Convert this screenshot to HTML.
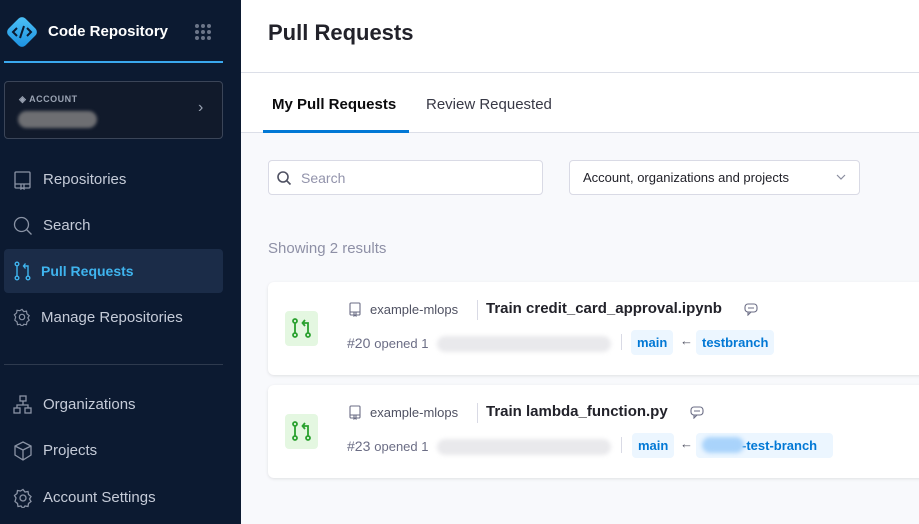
<!DOCTYPE html>
<html><head><style>
*{box-sizing:border-box;margin:0;padding:0}
body{width:919px;height:524px;overflow:hidden;font-family:"Liberation Sans",sans-serif;background:#f8f9fc;position:relative}
.sb{position:absolute;left:0;top:0;width:241px;height:524px;background:#0c1a31;color:#c9cfdb}
.abs{position:absolute}
.ic{position:absolute;left:13px}
.tx{position:absolute;left:43px;font-size:15px;color:#c5cbd8}
.card{position:absolute;left:268px;width:660px;height:93px;background:#fff;border-radius:6px;box-shadow:0 1px 3px rgba(0,0,0,.1)}
.tag{position:absolute;background:#ecf6ff;color:#0278d5;font-weight:bold;font-size:13px;padding:5px 6px;border-radius:4px}
.blur{position:absolute;height:16px;background:#e9e9ec;border-radius:8px;filter:blur(2px)}
</style></head><body>
<div class="sb">
  <svg class="abs" style="left:4px;top:14px" width="36" height="36" viewBox="0 0 36 36"><defs><linearGradient id="g" x1="0" y1="0" x2="1" y2="1"><stop offset="0" stop-color="#4fc3f7"/><stop offset="1" stop-color="#1a8fe0"/></linearGradient></defs><rect x="6" y="6" width="24" height="24" rx="5" transform="rotate(45 18 18)" fill="url(#g)"/><path d="M13 14l-4 4 4 4M23 14l4 4-4 4M20 12l-4 12" stroke="#0c1a31" stroke-width="2" fill="none"/></svg>
  <div class="abs" style="left:48px;top:23px;color:#fff;font-weight:bold;font-size:15px">Code Repository</div>
  <svg class="abs" style="left:194px;top:23px" width="18" height="18"><g fill="#6b7588"><circle cx="3" cy="3" r="2"/><circle cx="9" cy="3" r="2"/><circle cx="15" cy="3" r="2"/><circle cx="3" cy="9" r="2"/><circle cx="9" cy="9" r="2"/><circle cx="15" cy="9" r="2"/><circle cx="3" cy="15" r="2"/><circle cx="9" cy="15" r="2"/><circle cx="15" cy="15" r="2"/></g></svg>
  <div class="abs" style="left:4px;top:61px;width:219px;height:2px;background:#3aa8ee"></div>
  <div class="abs" style="left:4px;top:81px;width:219px;height:58px;border:1px solid #3b4558;border-radius:4px;background:#111a2b"></div>
  <div class="abs" style="left:19px;top:94px;font-size:9px;font-weight:bold;color:#9aa3b3;letter-spacing:.5px">◈ ACCOUNT</div>
  <div class="abs" style="left:18px;top:111px;width:79px;height:17px;border-radius:9px;background:#6d6e72;filter:blur(1.5px)"></div>
  <div class="abs" style="left:198px;top:99px;color:#9aa3b3;font-size:16px">›</div>

  <svg class="ic" style="top:170px" width="20" height="20" viewBox="0 0 20 20" fill="none" stroke="#8a93a5" stroke-width="1.3"><rect x="2" y="2" width="15" height="16" rx="1"/><path d="M2 14h15M8 14v5l1.5-1 1.5 1v-5"/></svg>
  <div class="tx" style="top:171px">Repositories</div>
  <svg class="ic" style="top:216px" width="20" height="20" viewBox="0 0 20 20" fill="none" stroke="#8a93a5" stroke-width="1.3"><circle cx="8.5" cy="8.5" r="7"/><path d="M13.5 13.5l5 5"/></svg>
  <div class="tx" style="top:217px">Search</div>
  <div class="abs" style="left:4px;top:249px;width:219px;height:44px;background:#1b2c48;border-radius:4px"></div>
  <svg class="ic" style="top:261px" width="20" height="20" viewBox="0 0 20 20" fill="none" stroke="#3fb4ee" stroke-width="1.4"><circle cx="4" cy="3" r="1.8"/><circle cx="4" cy="17" r="1.8"/><circle cx="15" cy="17" r="1.8"/><path d="M4 5v10M15 15V5h-4M12.5 2.5L10.5 5l2 2.5"/></svg>
  <div class="tx" style="top:263px;left:41px;color:#3fb4ee;font-weight:bold;font-size:14px">Pull Requests</div>
  <svg class="ic" style="top:308px" width="18" height="18" viewBox="0 0 20 20" fill="none" stroke="#8a93a5" stroke-width="1.3"><circle cx="10" cy="10" r="3"/><path d="M10 1.5l2 2.5 3-.5.5 3 2.5 2-1.5 2.5 1.5 2.5-2.5 2-.5 3-3-.5-2 2.5-2-2.5-3 .5-.5-3-2.5-2L3 10 1.5 7.5l2.5-2 .5-3 3 .5z"/></svg>
  <div class="tx" style="top:309px;left:41px">Manage Repositories</div>
  <div class="abs" style="left:4px;top:364px;width:219px;height:1px;background:#2e3a4e"></div>
  <svg class="ic" style="top:395px" width="20" height="20" viewBox="0 0 20 20" fill="none" stroke="#8a93a5" stroke-width="1.3"><rect x="7" y="1" width="6" height="5"/><rect x="1" y="13" width="6" height="5"/><rect x="12" y="13" width="6" height="5"/><path d="M10 6v4M4 13v-3h11v3"/></svg>
  <div class="tx" style="top:396px">Organizations</div>
  <svg class="ic" style="top:441px" width="20" height="20" viewBox="0 0 20 20" fill="none" stroke="#8a93a5" stroke-width="1.3"><path d="M10 1l8 4v9l-8 5-8-5V5zM2 5l8 4 8-4M10 9v10"/></svg>
  <div class="tx" style="top:442px">Projects</div>
  <svg class="ic" style="top:488px" width="20" height="20" viewBox="0 0 20 20" fill="none" stroke="#8a93a5" stroke-width="1.3"><circle cx="10" cy="10" r="3"/><path d="M10 1.5l2 2.5 3-.5.5 3 2.5 2-1.5 2.5 1.5 2.5-2.5 2-.5 3-3-.5-2 2.5-2-2.5-3 .5-.5-3-2.5-2L3 10 1.5 7.5l2.5-2 .5-3 3 .5z"/></svg>
  <div class="tx" style="top:489px">Account Settings</div>
</div>
<div class="abs" style="left:241px;top:0;width:678px;height:133px;background:#fff;border-bottom:1px solid #dcdfe8"></div>
<div class="abs" style="left:241px;top:72px;width:678px;height:1px;background:#dcdfe8"></div>
<div class="abs" style="left:268px;top:20px;font-size:22px;font-weight:bold;color:#22222a">Pull Requests</div>
<div class="abs" style="left:272px;top:96px;font-size:15px;font-weight:bold;color:#0b0b0d">My Pull Requests</div>
<div class="abs" style="left:426px;top:96px;font-size:15px;color:#383946">Review Requested</div>
<div class="abs" style="left:263px;top:130px;width:146px;height:3px;background:#0278d5"></div>
<div class="abs" style="left:268px;top:160px;width:275px;height:35px;background:#fff;border:1px solid #d9dae5;border-radius:4px"></div>
<svg class="abs" style="left:276px;top:170px" width="16" height="16" viewBox="0 0 16 16" fill="none" stroke="#4f5162" stroke-width="1.6"><circle cx="7" cy="7" r="5"/><path d="M11 11l3.5 3.5"/></svg>
<div class="abs" style="left:301px;top:170px;font-size:14px;color:#9293ab">Search</div>
<div class="abs" style="left:569px;top:160px;width:291px;height:35px;background:#fff;border:1px solid #d9dae5;border-radius:4px"></div>
<div class="abs" style="left:583px;top:170px;font-size:13px;color:#22222a">Account, organizations and projects</div>
<svg class="abs" style="left:836px;top:174px" width="10" height="6" viewBox="0 0 10 6" fill="none" stroke="#8a8d9f" stroke-width="1.2"><path d="M1 1l4 4 4-4"/></svg>
<div class="abs" style="left:268px;top:240px;font-size:15px;color:#8e90a6">Showing 2 results</div>

<div class="card" style="top:282px"></div>
<div class="card" style="top:385px"></div>

<div class="abs" style="left:285px;top:311px;width:33px;height:35px;background:#e4f7e1;border-radius:4px"></div>
<svg class="abs" style="left:291px;top:317px" width="22" height="22" viewBox="0 0 22 22" fill="none" stroke="#2aa12f" stroke-width="1.8"><circle cx="4" cy="4" r="2"/><circle cx="4" cy="18" r="2"/><circle cx="17" cy="18" r="2"/><path d="M4 6v10M17 16V6h-5M14 3l-2.5 3 2.5 3"/></svg>
<svg class="abs" style="left:349px;top:302px" width="13" height="15" viewBox="0 0 13 15" fill="none" stroke="#6b6d85" stroke-width="1.1"><rect x="1" y="1" width="10" height="12" rx="1"/><path d="M1 10h10M5 10v4l1-.7 1 .7v-4"/></svg>
<div class="abs" style="left:370px;top:302px;font-size:13px;color:#4f5162">example-mlops</div>
<div class="abs" style="left:477px;top:300px;width:1px;height:20px;background:#d9dae5"></div>
<div class="abs" style="left:486px;top:300px;font-size:15px;font-weight:bold;color:#22222a">Train credit_card_approval.ipynb</div>
<svg class="abs" style="left:744px;top:303px" width="14" height="13" viewBox="0 0 14 13" fill="none" stroke="#6b6d85" stroke-width="1.1"><rect x="1" y="1" width="12" height="8" rx="3"/><path d="M4 9v3l3-3M4 5h6"/></svg>
<div class="abs" style="left:347px;top:335px;font-size:14px;color:#6b6d85">#20 <span style="font-size:13px">opened 1</span></div>
<div class="blur" style="left:437px;top:336px;width:174px"></div>
<div class="abs" style="left:621px;top:334px;width:1px;height:16px;background:#d9dae5"></div>
<div class="tag" style="left:631px;top:330px">main</div>
<div class="abs" style="left:680px;top:333px;font-size:13px;color:#4f5162">←</div>
<div class="tag" style="left:696px;top:330px">testbranch</div>

<div class="abs" style="left:285px;top:414px;width:33px;height:35px;background:#e4f7e1;border-radius:4px"></div>
<svg class="abs" style="left:291px;top:420px" width="22" height="22" viewBox="0 0 22 22" fill="none" stroke="#2aa12f" stroke-width="1.8"><circle cx="4" cy="4" r="2"/><circle cx="4" cy="18" r="2"/><circle cx="17" cy="18" r="2"/><path d="M4 6v10M17 16V6h-5M14 3l-2.5 3 2.5 3"/></svg>
<svg class="abs" style="left:349px;top:405px" width="13" height="15" viewBox="0 0 13 15" fill="none" stroke="#6b6d85" stroke-width="1.1"><rect x="1" y="1" width="10" height="12" rx="1"/><path d="M1 10h10M5 10v4l1-.7 1 .7v-4"/></svg>
<div class="abs" style="left:370px;top:405px;font-size:13px;color:#4f5162">example-mlops</div>
<div class="abs" style="left:477px;top:403px;width:1px;height:20px;background:#d9dae5"></div>
<div class="abs" style="left:486px;top:403px;font-size:15px;font-weight:bold;color:#22222a">Train lambda_function.py</div>
<svg class="abs" style="left:690px;top:406px" width="14" height="13" viewBox="0 0 14 13" fill="none" stroke="#6b6d85" stroke-width="1.1"><rect x="1" y="1" width="12" height="8" rx="3"/><path d="M4 9v3l3-3M4 5h6"/></svg>
<div class="abs" style="left:347px;top:438px;font-size:14px;color:#6b6d85">#23 <span style="font-size:13px">opened 1</span></div>
<div class="blur" style="left:437px;top:439px;width:174px"></div>
<div class="abs" style="left:621px;top:437px;width:1px;height:16px;background:#d9dae5"></div>
<div class="tag" style="left:632px;top:433px">main</div>
<div class="abs" style="left:680px;top:436px;font-size:13px;color:#4f5162">←</div>
<div class="tag" style="left:696px;top:433px;width:137px;height:25px;padding:0"></div>
<div class="abs" style="left:742px;top:438px;font-size:13px;font-weight:bold;color:#0278d5">-test-branch</div>
<div class="abs" style="left:702px;top:437px;width:42px;height:16px;background:#a9d3fb;border-radius:8px;filter:blur(2px)"></div>
</body></html>
